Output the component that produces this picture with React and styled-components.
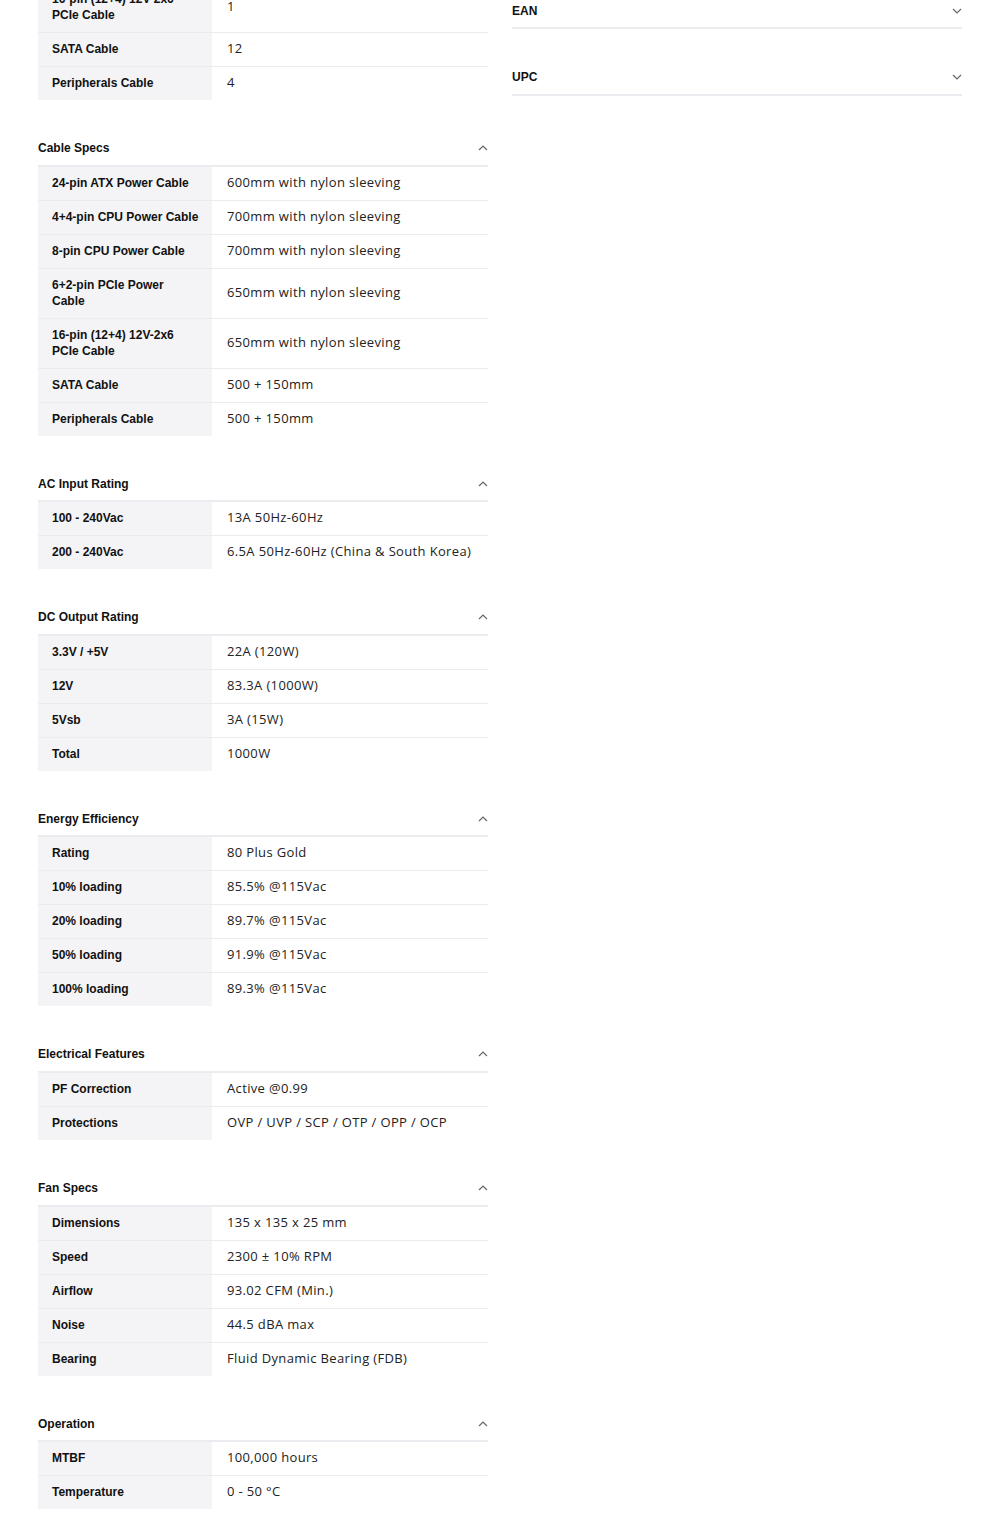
import React from "react";
import styled, { createGlobalStyle } from "styled-components";

const GlobalStyle = createGlobalStyle`
  body {
    margin: 0;
    background: #fff;
    color: #1d1d1f;
    font-family: "Liberation Sans", Arial, sans-serif;
  }
`;

const Page = styled.div`
  display: grid;
  grid-template-columns: 450px 450px;
  column-gap: 24px;
  align-items: start;
  padding: 0 38px;
  margin-top: -17px;
`;

const Column = styled.div`
  display: flex;
  flex-direction: column;
  padding-top: ${(p) => p.offset || 0}px;
`;

const Section = styled.section`
  margin-top: 31.6px;

  &:first-child {
    margin-top: 0;
  }
`;

const Header = styled.div`
  height: 33px;
  display: flex;
  align-items: center;
  justify-content: space-between;
  border-bottom: 2px solid #ececf0;
  font-size: 12px;
  font-weight: 700;
  color: #111;
`;

const Chevron = styled.svg`
  width: 10px;
  height: 6px;
`;

const Row = styled.div`
  display: grid;
  grid-template-columns: 174px 1fr;
  border-bottom: 1px solid #ebebef;

  &:last-child {
    border-bottom: none;
  }
`;

const Label = styled.div`
  background: #f4f4f6;
  padding: 8px 6px 9px 14px;
  font-size: 12px;
  line-height: 16px;
  font-weight: 700;
  color: #111;
  white-space: pre-line;
`;

const Value = styled.div`
  display: flex;
  align-items: center;
  padding: 7px 15px 10px;
  font-family: "Open Sans", sans-serif;
  font-size: 13px;
  line-height: 16px;
  letter-spacing: 0.35px;
  color: #222;
`;

const Arrow = ({ up }) => (
  <Chevron viewBox="0 0 10 6">
    <polyline
      points={up ? "1,5 5,1 9,5" : "1,1 5,5 9,1"}
      fill="none"
      stroke="#666"
      strokeWidth="1.2"
    />
  </Chevron>
);

const Spec = ({ title, rows }) => (
  <Section>
    {title && (
      <Header>
        <span>{title}</span>
        <Arrow up />
      </Header>
    )}
    <div>
      {rows.map(([k, v]) => (
        <Row key={k}>
          <Label>{k}</Label>
          <Value>{v}</Value>
        </Row>
      ))}
    </div>
  </Section>
);

const left = [
  {
    title: null,
    rows: [
      ["16-pin (12+4) 12V-2x6\nPCIe Cable", "1"],
      ["SATA Cable", "12"],
      ["Peripherals Cable", "4"],
    ],
  },
  {
    title: "Cable Specs",
    rows: [
      ["24-pin ATX Power Cable", "600mm with nylon sleeving"],
      ["4+4-pin CPU Power Cable", "700mm with nylon sleeving"],
      ["8-pin CPU Power Cable", "700mm with nylon sleeving"],
      ["6+2-pin PCIe Power\nCable", "650mm with nylon sleeving"],
      ["16-pin (12+4) 12V-2x6\nPCIe Cable", "650mm with nylon sleeving"],
      ["SATA Cable", "500 + 150mm"],
      ["Peripherals Cable", "500 + 150mm"],
    ],
  },
  {
    title: "AC Input Rating",
    rows: [
      ["100 - 240Vac", "13A 50Hz-60Hz"],
      ["200 - 240Vac", "6.5A 50Hz-60Hz (China & South Korea)"],
    ],
  },
  {
    title: "DC Output Rating",
    rows: [
      ["3.3V / +5V", "22A (120W)"],
      ["12V", "83.3A (1000W)"],
      ["5Vsb", "3A (15W)"],
      ["Total", "1000W"],
    ],
  },
  {
    title: "Energy Efficiency",
    rows: [
      ["Rating", "80 Plus Gold"],
      ["10% loading", "85.5% @115Vac"],
      ["20% loading", "89.7% @115Vac"],
      ["50% loading", "91.9% @115Vac"],
      ["100% loading", "89.3% @115Vac"],
    ],
  },
  {
    title: "Electrical Features",
    rows: [
      ["PF Correction", "Active @0.99"],
      ["Protections", "OVP / UVP / SCP / OTP / OPP / OCP"],
    ],
  },
  {
    title: "Fan Specs",
    rows: [
      ["Dimensions", "135 x 135 x 25 mm"],
      ["Speed", "2300 ± 10% RPM"],
      ["Airflow", "93.02 CFM (Min.)"],
      ["Noise", "44.5 dBA max"],
      ["Bearing", "Fluid Dynamic Bearing (FDB)"],
    ],
  },
  {
    title: "Operation",
    rows: [
      ["MTBF", "100,000 hours"],
      ["Temperature", "0 - 50 °C"],
    ],
  },
];

const codes = ["EAN", "UPC"];

export default function App() {
  return (
    <>
      <GlobalStyle />
      <Page>
        <Column>
          {left.map((s, i) => (
            <Spec key={i} title={s.title} rows={s.rows} />
          ))}
        </Column>
        <Column offset={11}>
          {codes.map((c) => (
            <Section key={c}>
              <Header>
                <span>{c}</span>
                <Arrow />
              </Header>
            </Section>
          ))}
        </Column>
      </Page>
    </>
  );
}
